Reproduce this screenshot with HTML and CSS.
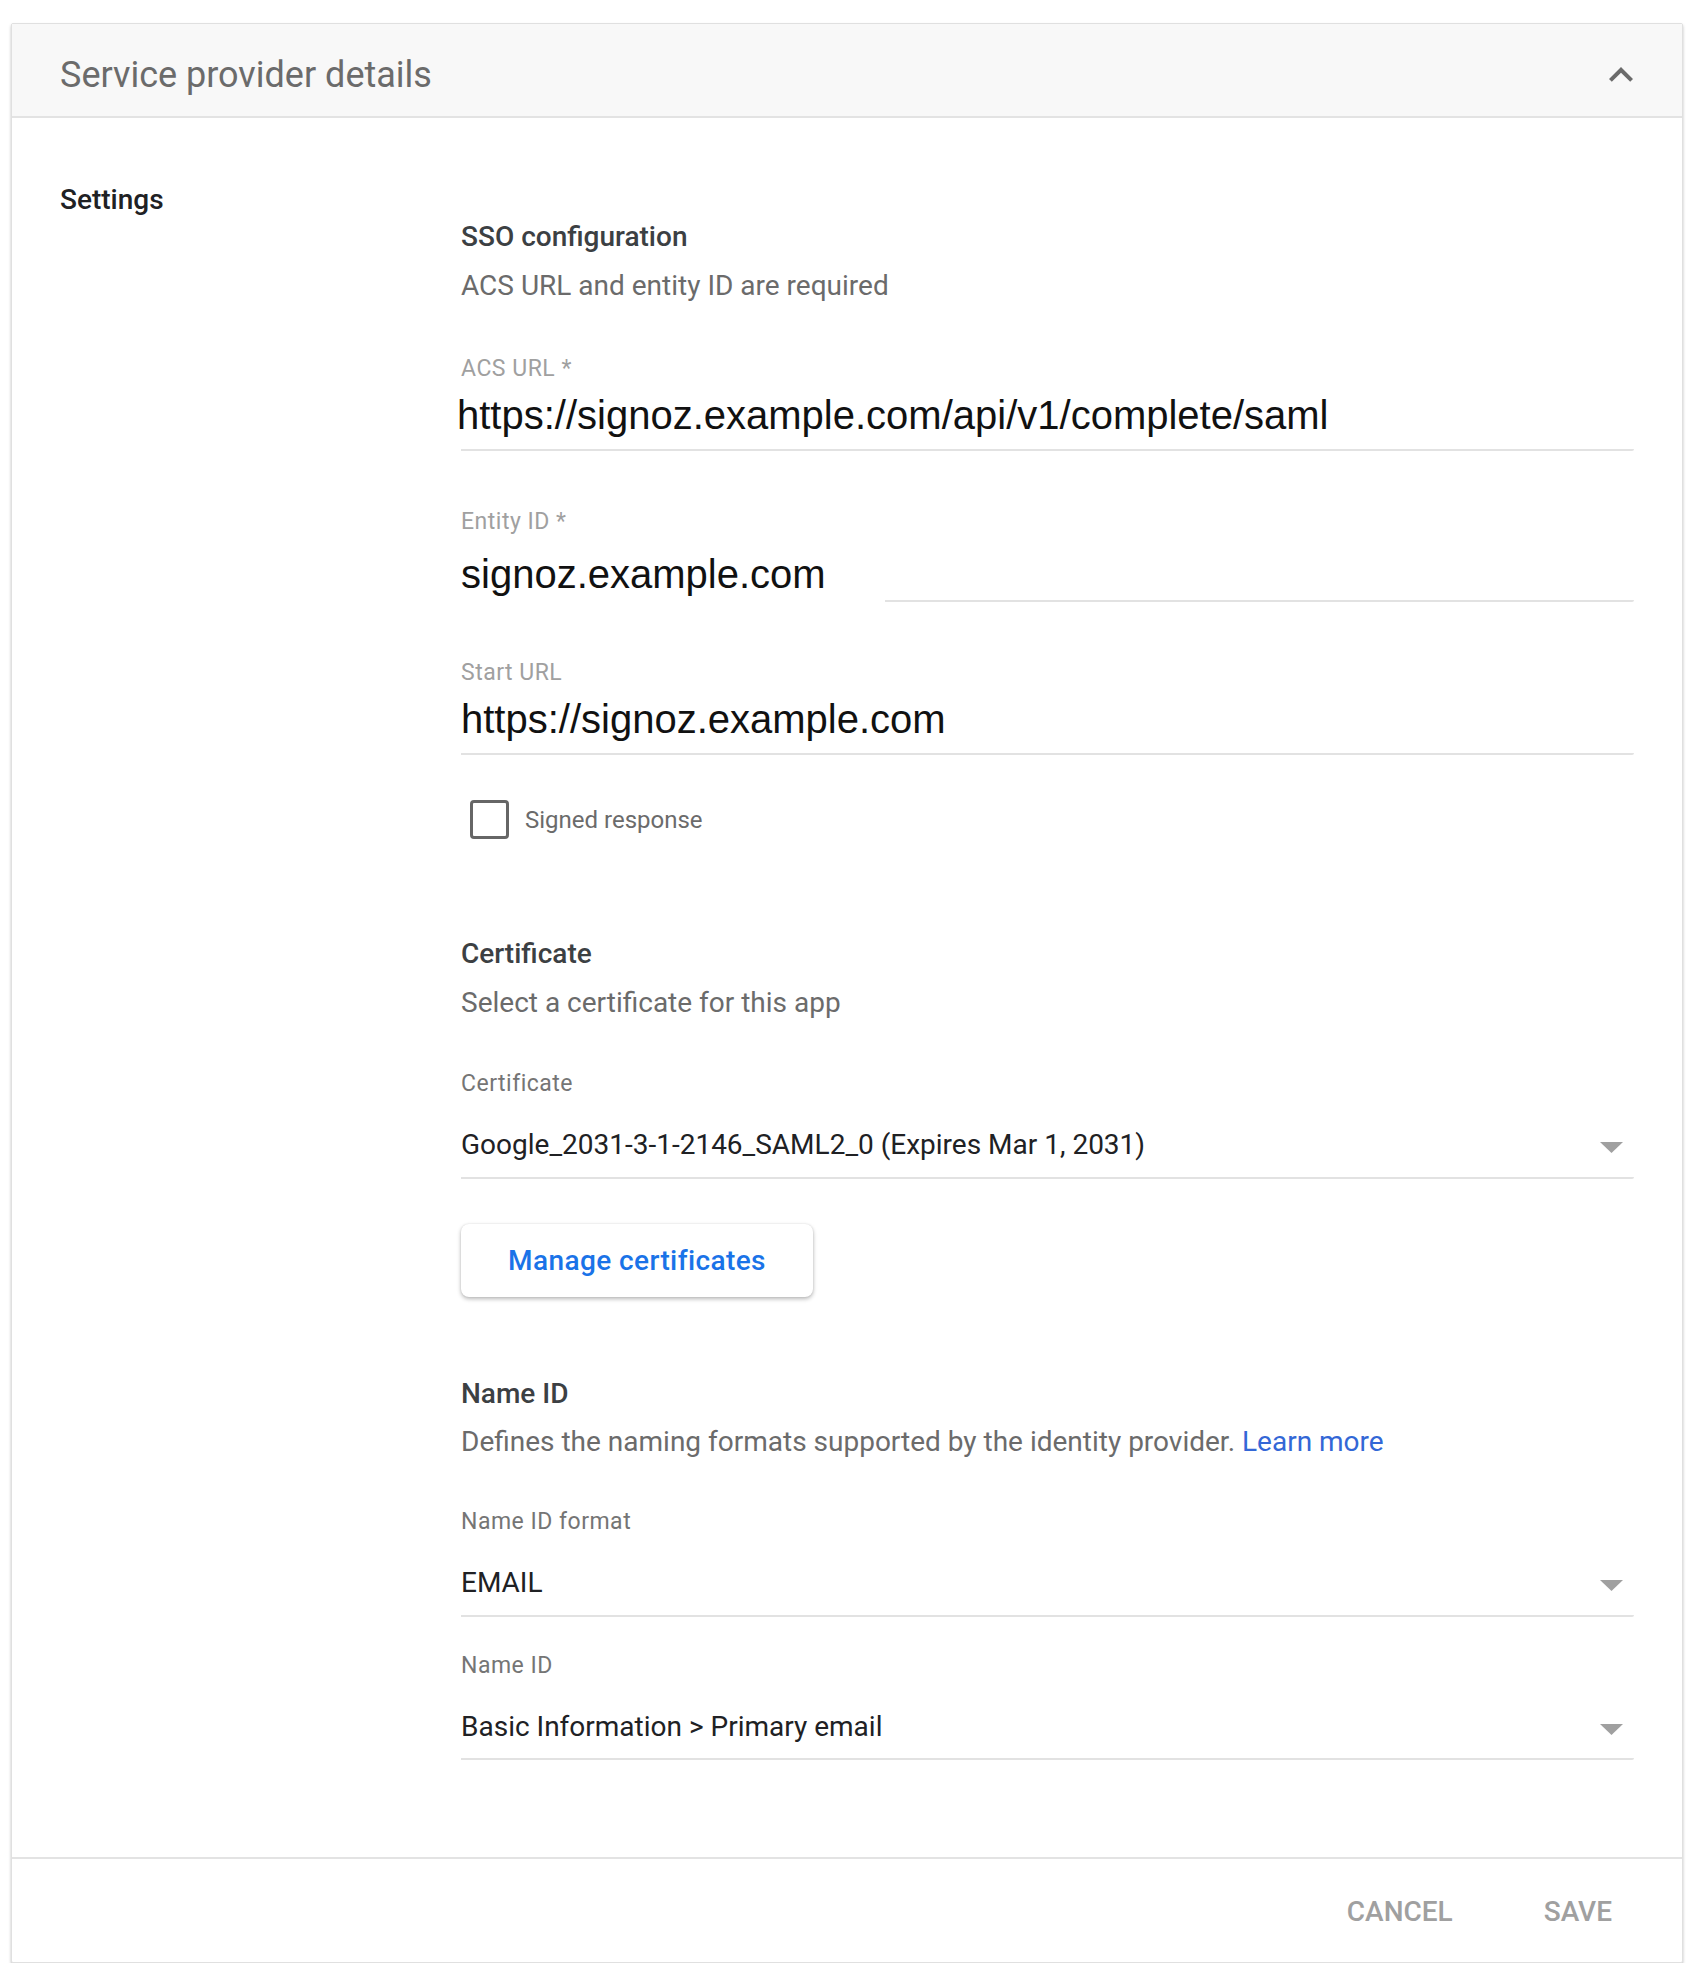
FILE: index.html
```html
<!DOCTYPE html>
<html lang="en">
<head>
    <meta charset="UTF-8">
    <meta name="viewport" content="width=device-width, initial-scale=1.0">
    <title>Service provider details</title>
    <link rel="stylesheet" href="styles.css">
</head>
<body>
    <div class="card">
        <div class="card-header">
            <h2>Service provider details</h2>
            <svg class="chevron" width="48" height="48" viewBox="0 0 24 24">
                <path d="M12 8l-6 6 1.41 1.41L12 10.83l4.59 4.58L18 14z"/>
            </svg>
        </div>

        <div class="card-body">
            <div class="side-title">Settings</div>

            <div class="settings">
                <div class="section-title">SSO configuration</div>
                <div class="section-desc">ACS URL and entity ID are required</div>

                <div class="field first">
                    <div class="field-label light">ACS URL *</div>
                    <div class="url-value shift">https://signoz.example.com/api/v1/complete/saml</div>
                    <div class="underline"></div>
                </div>

                <div class="field entity">
                    <div class="field-label light">Entity ID *</div>
                    <div class="url-value">signoz.example.com</div>
                    <div class="underline"></div>
                </div>

                <div class="field">
                    <div class="field-label light">Start URL</div>
                    <div class="url-value">https://signoz.example.com</div>
                    <div class="underline"></div>
                </div>

                <div class="check-row">
                    <span class="checkbox"></span>
                    <span class="check-label">Signed response</span>
                </div>

                <div class="section-title cert-title">Certificate</div>
                <div class="section-desc">Select a certificate for this app</div>

                <div class="field select-field">
                    <div class="field-label">Certificate</div>
                    <div class="select-value">
                        <span>Google_2031-3-1-2146_SAML2_0 (Expires Mar 1, 2031)</span>
                        <svg class="arrow" width="23" height="11" viewBox="0 0 23 11"><polygon points="0,0 23,0 11.5,11"/></svg>
                    </div>
                    <div class="underline"></div>
                </div>

                <button class="outline-btn">Manage certificates</button>

                <div class="section-title name-title">Name ID</div>
                <div class="section-desc">Defines the naming formats supported by the identity provider. <a href="#">Learn more</a></div>

                <div class="field select-field">
                    <div class="field-label">Name ID format</div>
                    <div class="select-value">
                        <span>EMAIL</span>
                        <svg class="arrow" width="23" height="11" viewBox="0 0 23 11"><polygon points="0,0 23,0 11.5,11"/></svg>
                    </div>
                    <div class="underline"></div>
                </div>

                <div class="field select-field second">
                    <div class="field-label">Name ID</div>
                    <div class="select-value">
                        <span>Basic Information &gt; Primary email</span>
                        <svg class="arrow" width="23" height="11" viewBox="0 0 23 11"><polygon points="0,0 23,0 11.5,11"/></svg>
                    </div>
                    <div class="underline last"></div>
                </div>
            </div>
        </div>

        <div class="card-footer">
            <button class="text-btn">CANCEL</button>
            <button class="text-btn">SAVE</button>
        </div>
    </div>
</body>
</html>
```

FILE: styles.css
```css
body {
    margin: 0;
    padding: 23px 13px 0 11px;
    font-family: Roboto, "Noto Sans", Arial, sans-serif;
    background: #fff;
}
.card {
    border: 1px solid #e0e0e0;
    border-radius: 2px;
    box-shadow: 0 2px 3px rgba(0, 0, 0, 0.25);
    background: #fff;
}
.card-header {
    height: 94px;
    box-sizing: border-box;
    padding: 9px 37px 0 48px;
    display: flex;
    align-items: center;
    justify-content: space-between;
    background: #f8f8f8;
    border-bottom: 2px solid #e3e3e3;
}
.card-header h2 {
    margin: 0;
    font-size: 36px;
    font-weight: 400;
    line-height: 44px;
    color: #6b6b6b;
}
.chevron {
    fill: #6b6b6b;
}
.card-body {
    display: flex;
    padding: 64px 48px 97px 48px;
}
.side-title {
    flex: 0 0 401px;
    font-size: 28px;
    font-weight: 500;
    line-height: 36px;
    color: #202124;
}
.settings {
    flex: 1;
    padding-top: 37px;
}
.section-title {
    font-size: 28px;
    font-weight: 500;
    line-height: 36px;
    color: #3c4043;
}
.section-desc {
    margin-top: 13px;
    font-size: 28px;
    line-height: 36px;
    color: #6b6b6b;
}
.section-desc a {
    color: #3367d6;
    text-decoration: none;
}
.field {
    margin-top: 57px;
}
.field.first {
    margin-top: 51px;
}
.field-label {
    font-size: 23px;
    letter-spacing: 0.5px;
    line-height: 28px;
    color: #757575;
}
.field-label.light {
    color: #a0a0a0;
}
.url-value {
    margin-top: 8px;
    font-family: "Liberation Sans", Arial, sans-serif;
    font-size: 40px;
    line-height: 48px;
    color: #111;
    white-space: nowrap;
}
.url-value.shift {
    margin-left: -4px;
}
.underline {
    margin-top: 10px;
    height: 2px;
    background: #e2e2e2;
    border-radius: 0 0 2px 0;
}
.entity .url-value {
    margin-top: 14px;
}
.entity .underline {
    margin-top: 2px;
    margin-left: 424px;
}
.check-row {
    display: flex;
    align-items: center;
    margin-top: 45px;
    padding-left: 9px;
    height: 39px;
}
.checkbox {
    width: 39px;
    height: 39px;
    box-sizing: border-box;
    border: 3px solid #666;
    border-radius: 4px;
}
.check-label {
    margin-left: 16px;
    font-size: 24px;
    line-height: 38px;
    color: #6b6b6b;
}
.cert-title {
    margin-top: 97px;
}
.select-field {
    margin-top: 49px;
}
.select-field.second {
    margin-top: 35px;
}
.select-value {
    margin-top: 29px;
    display: flex;
    align-items: center;
    justify-content: space-between;
    padding-right: 11px;
    font-size: 28px;
    line-height: 36px;
    color: #202124;
}
.arrow {
    fill: #a0a0a0;
    margin-top: 4px;
}
.select-field .underline {
    margin-top: 14px;
}
.select-field .underline.last {
    margin-top: 13px;
}
.outline-btn {
    display: block;
    margin-top: 45px;
    width: 352px;
    height: 73px;
    border: none;
    border-radius: 8px;
    background: #fff;
    box-shadow: 0 2px 4px rgba(0, 0, 0, 0.28), 0 0 2px rgba(0, 0, 0, 0.1);
    font-family: Roboto, Arial, sans-serif;
    font-size: 28px;
    font-weight: 500;
    letter-spacing: 0.4px;
    color: #1a73e8;
    cursor: pointer;
}
.name-title {
    margin-top: 79px;
}
.name-title + .section-desc {
    margin-top: 12px;
}
.name-title + .section-desc + .select-field {
    margin-top: 48px;
}
.card-footer {
    display: flex;
    justify-content: flex-end;
    gap: 47px;
    padding: 35px 48px 32px 0;
    border-top: 2px solid #e3e3e3;
}
.text-btn {
    padding: 0 22px;
    border: none;
    background: none;
    font-family: Roboto, Arial, sans-serif;
    font-size: 28px;
    font-weight: 500;
    line-height: 36px;
    color: #a0a0a0;
    cursor: pointer;
}
```
